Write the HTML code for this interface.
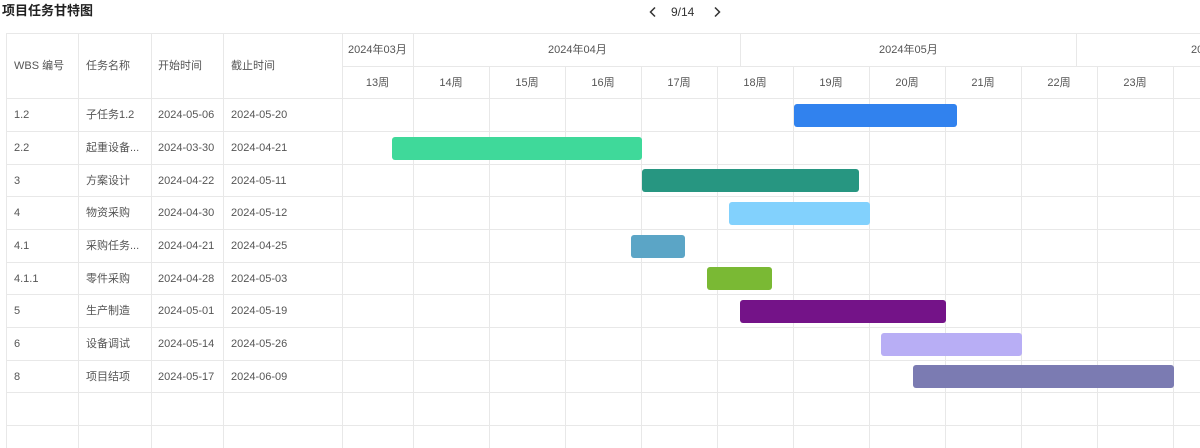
<!DOCTYPE html>
<html><head><meta charset="utf-8"><style>
*{margin:0;padding:0;box-sizing:border-box}
body{width:1200px;height:448px;overflow:hidden;background:#fff;font-family:"Liberation Sans","Noto Sans CJK SC",sans-serif;font-size:11px;color:#555;position:relative}
.v{position:absolute;width:1px;background:#e8e8e8}
.h{position:absolute;height:1px;background:#e8e8e8}
.t{position:absolute;white-space:nowrap;line-height:14px}
.c{position:absolute;white-space:nowrap;line-height:14px;text-align:center}
.b{position:absolute;height:23px;border-radius:3px}
</style></head><body>
<div class="t" style="left:2px;top:4px;font-size:13px;font-weight:bold;color:#222">项目任务甘特图</div>
<svg style="position:absolute;left:648px;top:6px" width="10" height="12" viewBox="0 0 10 12"><path d="M7 1.5 L2.5 6 L7 10.5" fill="none" stroke="#333" stroke-width="1.5"/></svg>
<div class="t" style="left:671px;top:5px;font-size:12px;color:#333">9/14</div>
<svg style="position:absolute;left:712px;top:6px" width="10" height="12" viewBox="0 0 10 12"><path d="M3 1.5 L7.5 6 L3 10.5" fill="none" stroke="#333" stroke-width="1.5"/></svg>

<div class="h" style="left:6px;width:1194px;top:33px"></div>
<div class="h" style="left:342px;width:858px;top:66px"></div>
<div class="h" style="left:6px;width:1194px;top:98px"></div>
<div class="h" style="left:6px;width:1194px;top:131px"></div>
<div class="h" style="left:6px;width:1194px;top:164px"></div>
<div class="h" style="left:6px;width:1194px;top:196px"></div>
<div class="h" style="left:6px;width:1194px;top:229px"></div>
<div class="h" style="left:6px;width:1194px;top:262px"></div>
<div class="h" style="left:6px;width:1194px;top:294px"></div>
<div class="h" style="left:6px;width:1194px;top:327px"></div>
<div class="h" style="left:6px;width:1194px;top:360px"></div>
<div class="h" style="left:6px;width:1194px;top:392px"></div>
<div class="h" style="left:6px;width:1194px;top:425px"></div>

<div class="v" style="left:6px;top:33px;height:415px"></div>
<div class="v" style="left:78px;top:33px;height:415px"></div>
<div class="v" style="left:151px;top:33px;height:415px"></div>
<div class="v" style="left:223px;top:33px;height:415px"></div>
<div class="v" style="left:342px;top:33px;height:415px"></div>
<div class="v" style="left:413px;top:33px;height:415px"></div>
<div class="v" style="left:740px;top:33px;height:33px"></div>
<div class="v" style="left:1076px;top:33px;height:33px"></div>
<div class="v" style="left:489px;top:66px;height:382px"></div>
<div class="v" style="left:565px;top:66px;height:382px"></div>
<div class="v" style="left:641px;top:66px;height:382px"></div>
<div class="v" style="left:717px;top:66px;height:382px"></div>
<div class="v" style="left:793px;top:66px;height:382px"></div>
<div class="v" style="left:869px;top:66px;height:382px"></div>
<div class="v" style="left:945px;top:66px;height:382px"></div>
<div class="v" style="left:1021px;top:66px;height:382px"></div>
<div class="v" style="left:1097px;top:66px;height:382px"></div>
<div class="v" style="left:1173px;top:66px;height:382px"></div>

<div class="t" style="left:14px;top:59px">WBS 编号</div>
<div class="t" style="left:86px;top:59px">任务名称</div>
<div class="t" style="left:158px;top:59px">开始时间</div>
<div class="t" style="left:231px;top:59px">截止时间</div>
<div class="t" style="left:348px;top:43px">2024年03月</div>
<div class="t" style="left:548px;top:43px">2024年04月</div>
<div class="t" style="left:879px;top:43px">2024年05月</div>
<div class="t" style="left:1191px;top:43px">20</div>
<div class="c" style="left:342px;width:71px;top:76px">13周</div>
<div class="c" style="left:413px;width:76px;top:76px">14周</div>
<div class="c" style="left:489px;width:76px;top:76px">15周</div>
<div class="c" style="left:565px;width:76px;top:76px">16周</div>
<div class="c" style="left:641px;width:76px;top:76px">17周</div>
<div class="c" style="left:717px;width:76px;top:76px">18周</div>
<div class="c" style="left:793px;width:76px;top:76px">19周</div>
<div class="c" style="left:869px;width:76px;top:76px">20周</div>
<div class="c" style="left:945px;width:76px;top:76px">21周</div>
<div class="c" style="left:1021px;width:76px;top:76px">22周</div>
<div class="c" style="left:1097px;width:76px;top:76px">23周</div>

<div class="t" style="left:14px;top:108px">1.2</div><div class="t" style="left:86px;top:108px">子任务1.2</div><div class="t" style="left:158px;top:108px">2024-05-06</div><div class="t" style="left:231px;top:108px">2024-05-20</div>
<div class="t" style="left:14px;top:141px">2.2</div><div class="t" style="left:86px;top:141px">起重设备...</div><div class="t" style="left:158px;top:141px">2024-03-30</div><div class="t" style="left:231px;top:141px">2024-04-21</div>
<div class="t" style="left:14px;top:174px">3</div><div class="t" style="left:86px;top:174px">方案设计</div><div class="t" style="left:158px;top:174px">2024-04-22</div><div class="t" style="left:231px;top:174px">2024-05-11</div>
<div class="t" style="left:14px;top:206px">4</div><div class="t" style="left:86px;top:206px">物资采购</div><div class="t" style="left:158px;top:206px">2024-04-30</div><div class="t" style="left:231px;top:206px">2024-05-12</div>
<div class="t" style="left:14px;top:239px">4.1</div><div class="t" style="left:86px;top:239px">采购任务...</div><div class="t" style="left:158px;top:239px">2024-04-21</div><div class="t" style="left:231px;top:239px">2024-04-25</div>
<div class="t" style="left:14px;top:272px">4.1.1</div><div class="t" style="left:86px;top:272px">零件采购</div><div class="t" style="left:158px;top:272px">2024-04-28</div><div class="t" style="left:231px;top:272px">2024-05-03</div>
<div class="t" style="left:14px;top:304px">5</div><div class="t" style="left:86px;top:304px">生产制造</div><div class="t" style="left:158px;top:304px">2024-05-01</div><div class="t" style="left:231px;top:304px">2024-05-19</div>
<div class="t" style="left:14px;top:337px">6</div><div class="t" style="left:86px;top:337px">设备调试</div><div class="t" style="left:158px;top:337px">2024-05-14</div><div class="t" style="left:231px;top:337px">2024-05-26</div>
<div class="t" style="left:14px;top:370px">8</div><div class="t" style="left:86px;top:370px">项目结项</div><div class="t" style="left:158px;top:370px">2024-05-17</div><div class="t" style="left:231px;top:370px">2024-06-09</div>

<div class="b" style="left:794px;width:163px;top:104px;background:#3182EE"></div>
<div class="b" style="left:392px;width:250px;top:137px;background:#3FD99A"></div>
<div class="b" style="left:642px;width:217px;top:169px;background:#279681"></div>
<div class="b" style="left:729px;width:141px;top:202px;background:#82D1FD"></div>
<div class="b" style="left:631px;width:54px;top:235px;background:#5BA5C6"></div>
<div class="b" style="left:707px;width:65px;top:267px;background:#7AB934"></div>
<div class="b" style="left:740px;width:206px;top:300px;background:#741388"></div>
<div class="b" style="left:881px;width:141px;top:333px;background:#B8AEF5"></div>
<div class="b" style="left:913px;width:261px;top:365px;background:#7B7BB2"></div>
</body></html>
